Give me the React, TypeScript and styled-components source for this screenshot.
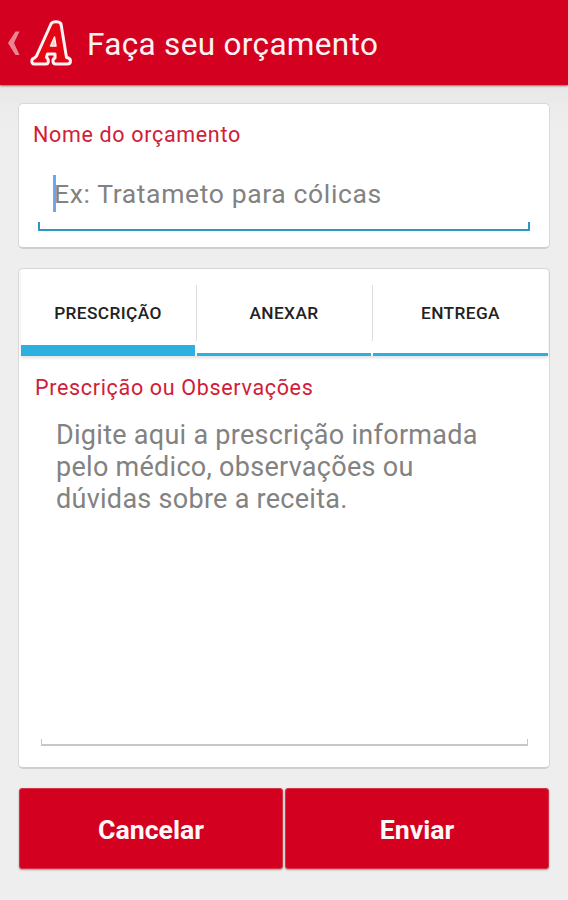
import React from "react";
import styled, { createGlobalStyle } from "styled-components";

const GlobalStyle = createGlobalStyle`
  * { box-sizing: border-box; }
  body { margin: 0; background: #eeeeee; font-family: Roboto, sans-serif; }
`;

const Screen = styled.div`
  width: 568px;
  height: 900px;
  overflow: hidden;
  background: linear-gradient(#e8e8e8 85px, #eeeeee 125px);
`;

const ActionBar = styled.header`
  display: flex;
  align-items: center;
  height: 85px;
  padding-left: 6px;
  background: #d30020;
  box-shadow: 0 1px 2px rgba(90, 50, 50, 0.7);
`;

const BackIcon = styled.svg`
  width: 16px;
  height: 28px;
`;

const LogoIcon = styled.svg`
  width: 44px;
  height: 48px;
  margin: 0 13px 0 7px;
`;

const Title = styled.h1`
  margin: 4px 0 0 1px;
  color: #fff2f3;
  font-size: 31.5px;
  line-height: 36px;
  font-weight: 400;
  letter-spacing: 0.33px;
  white-space: nowrap;
`;

const Content = styled.main`
  display: flex;
  flex-direction: column;
  gap: 19px;
  padding: 18px 18px 0 18px;
`;

const Card = styled.section<{ $height: number }>`
  display: flex;
  flex-direction: column;
  width: 532px;
  height: ${(p) => p.$height}px;
  background: #ffffff;
  border: 1px solid #d9d9d9;
  border-bottom: 2px solid #cecece;
  border-radius: 5px;
`;

const Label = styled.label<{ $indent: number; $top: number }>`
  display: block;
  margin: ${(p) => p.$top}px 0 0 ${(p) => p.$indent}px;
  color: #d02037;
  font-size: 21.5px;
  line-height: 26px;
  letter-spacing: 0.67px;
  white-space: nowrap;
`;

const Field = styled.div<{ $focused?: boolean }>`
  display: flex;
  flex-direction: column;
  justify-content: flex-end;
  color: #828282;
  flex: 1;
  margin: ${(p) => (p.$focused ? "24px 19px 16px 19px" : "18px 21px 21px 22px")};
`;

const Hint = styled.div`
  display: flex;
  align-items: center;
  height: 40px;
  padding-left: 15px;
  margin-bottom: 9px;
  font-size: 26.5px;
  letter-spacing: 0.63px;
  white-space: nowrap;
`;

const Caret = styled.span`
  width: 3px;
  height: 37px;
  margin-right: -2px;
  background: #67a9f6;
`;

const Multiline = styled.p`
  flex: 1;
  margin: 0 0 0 15px;
  font-size: 27px;
  line-height: 32px;
  letter-spacing: 0.28px;
`;

const Underline = styled.div<{ $focused?: boolean }>`
  height: ${(p) => (p.$focused ? 9 : 7)}px;
  border: solid ${(p) => (p.$focused ? "#2c96c4" : "#c8c8c8")};
  border-width: ${(p) => (p.$focused ? "0 2px 2px" : "0 1px 2px")};
`;

const Tabs = styled.nav`
  display: grid;
  grid-template-columns: 174px 174px 175px;
  gap: 2px;
  height: 87px;
  margin: 0 1px 0 2px;
  flex: none;
  box-shadow: 0 2px 3px rgba(0, 0, 0, 0.12);
`;

const Tab = styled.div<{ $active?: boolean; $divider?: boolean }>`
  position: relative;
  display: flex;
  justify-content: center;
  padding-top: 33px;
  color: #222222;
  font-size: 17.3px;
  line-height: 22px;
  font-weight: 500;
  letter-spacing: 0.4px;
  border-bottom: ${(p) => (p.$active ? 11 : 3)}px solid #2cb0df;

  &::after {
    content: "";
    display: ${(p) => (p.$divider ? "block" : "none")};
    position: absolute;
    right: -2px;
    top: 16px;
    width: 1px;
    height: 56px;
    background: #dddddd;
  }
`;

const Buttons = styled.div`
  display: grid;
  grid-template-columns: 264px 264px;
  gap: 2px;
  padding-left: 1px;
`;

const Button = styled.button`
  height: 81px;
  padding: 3px 0 0;
  border: 1px solid #d23446;
  border-radius: 3px;
  background: #d30020;
  box-shadow: 0 1px 2px rgba(0, 0, 0, 0.35);
  color: #fff8f8;
  font-family: inherit;
  font-size: 26.7px;
  font-weight: 700;
  letter-spacing: 0;
`;

export default function App() {
  return (
    <Screen>
      <GlobalStyle />
      <ActionBar>
        <BackIcon viewBox="0 0 16 28">
          <path d="M9.500 2.500H13.500L8 14l5.500 12H9.500L2 14Z" fill="#eb8591" />
        </BackIcon>
        <LogoIcon viewBox="0 0 44 48">
          <path
            d="M22 5C23.500 2 30.500 2 32 5L37.500 38.500C41 39 41.500 40.500 41.500 42C41.500 44.500 40 45 38 45H26.500C23.500 45 23 40 26 39V35H18.500L17.500 38.500C20 40 20 45 17 45H5C2 45 2 39.500 5.500 39L7.500 37Z"
            fill="#e60512"
            stroke="#fff3f3"
            strokeWidth="3"
            strokeLinejoin="round"
          />
          <path d="M25.500 18L27 27H21.500Z" fill="#f5c9cd" stroke="#fff3f3" strokeWidth="1.500" strokeLinejoin="round" />
        </LogoIcon>
        <Title>Faça seu orçamento</Title>
      </ActionBar>
      <Content>
        <Card $height={146}>
          <Label $indent={14} $top={18}>Nome do orçamento</Label>
          <Field $focused>
            <Hint>
              <Caret />
              Ex: Tratameto para cólicas
            </Hint>
            <Underline $focused />
          </Field>
        </Card>
        <Card $height={501}>
          <Tabs>
            <Tab $active $divider>PRESCRIÇÃO</Tab>
            <Tab $divider>ANEXAR</Tab>
            <Tab>ENTREGA</Tab>
          </Tabs>
          <Label $indent={16} $top={19}>Prescrição ou Observações</Label>
          <Field>
            <Multiline>
              Digite aqui a prescrição informada
              <br />
              pelo médico, observações ou
              <br />
              dúvidas sobre a receita.
            </Multiline>
            <Underline />
          </Field>
        </Card>
        <Buttons>
          <Button>Cancelar</Button>
          <Button>Enviar</Button>
        </Buttons>
      </Content>
    </Screen>
  );
}
